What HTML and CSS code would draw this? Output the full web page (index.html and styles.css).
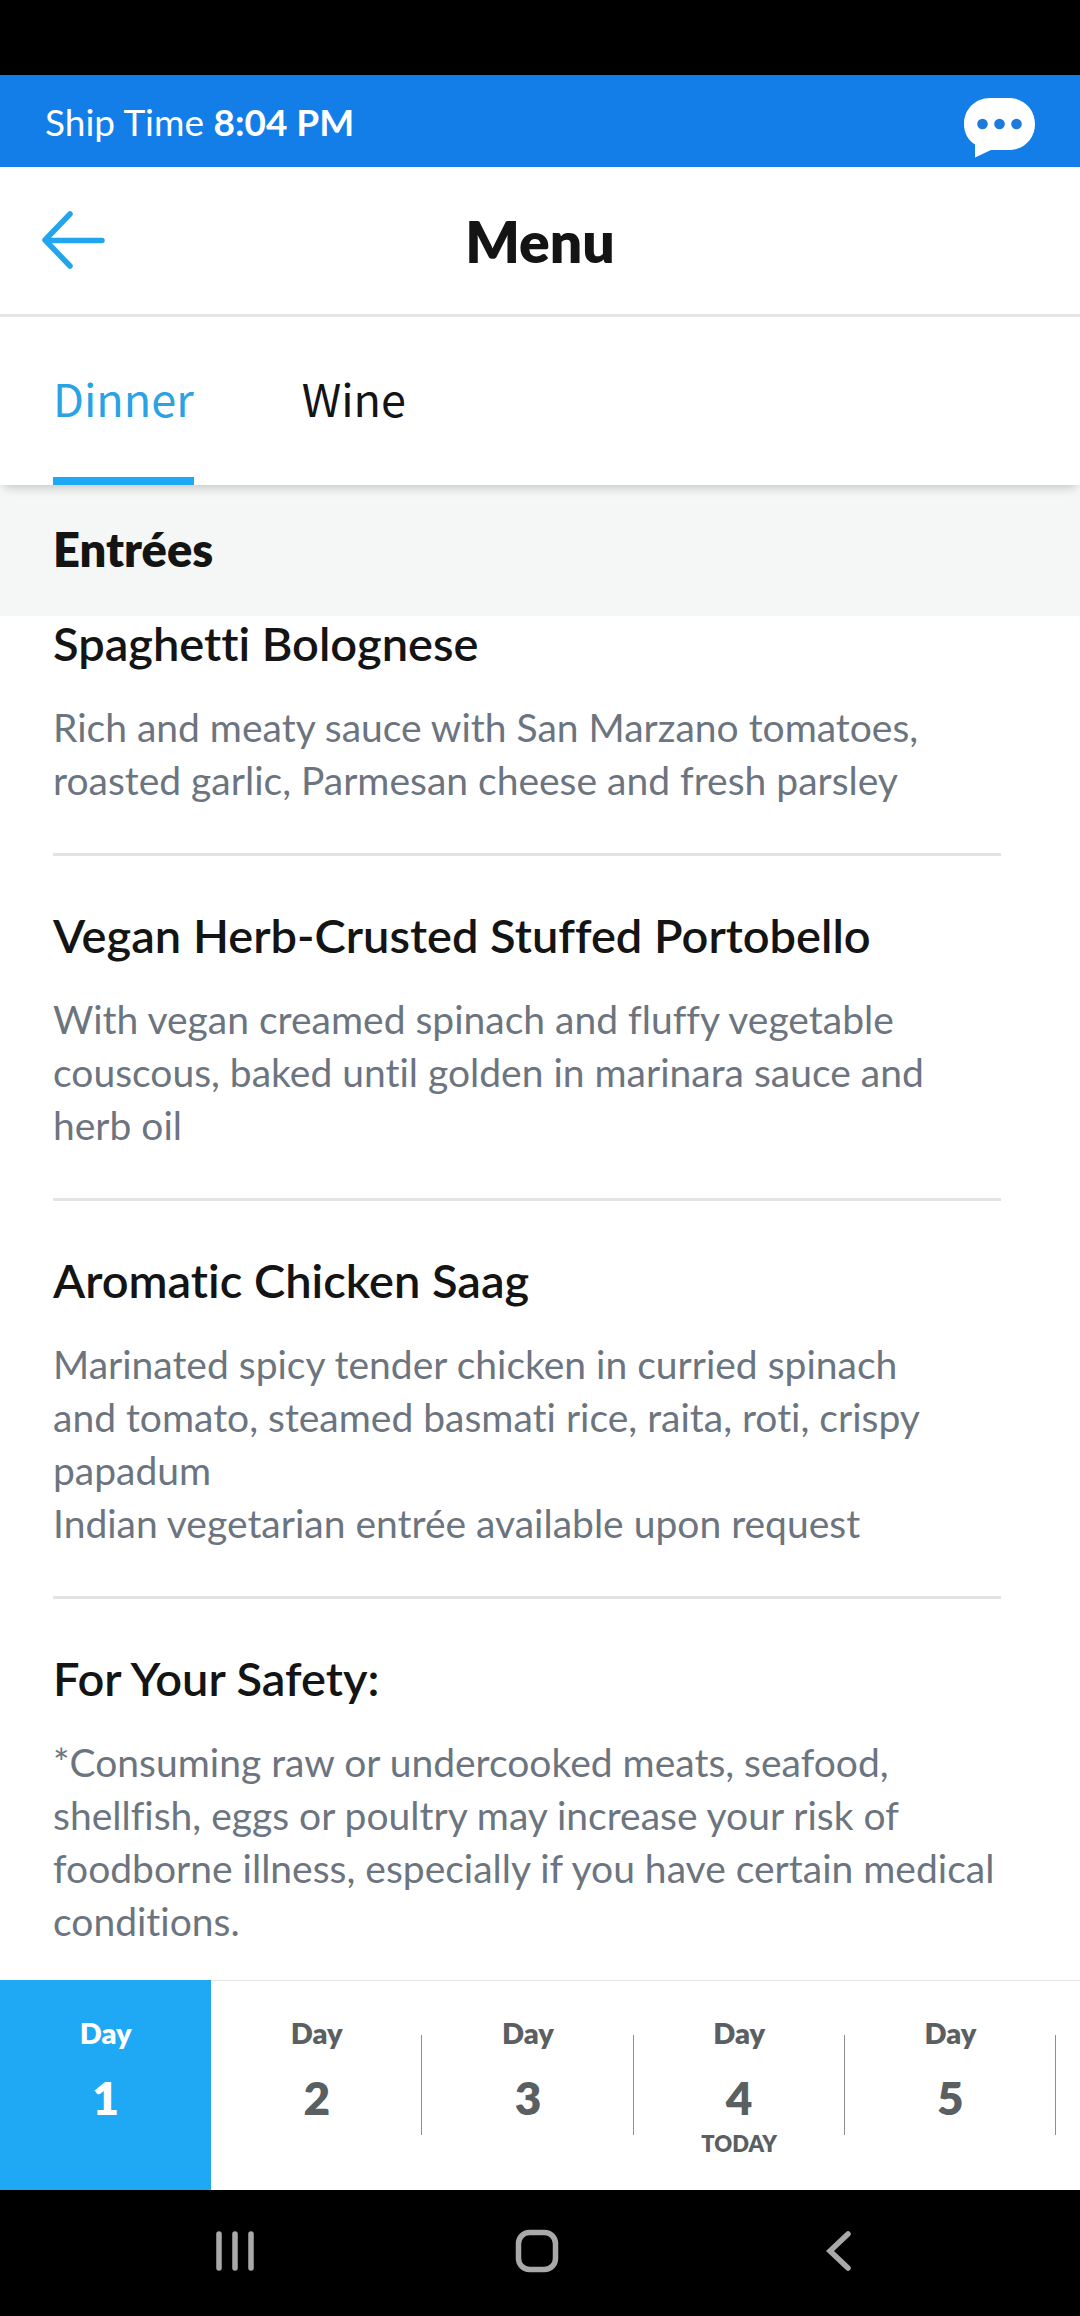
FILE: index.html
```html
<!DOCTYPE html>
<html lang="en">

<head>
    <meta charset="UTF-8">
    <meta name="viewport" content="width=device-width, initial-scale=1.0">
    <title>Menu</title>
    <link rel="stylesheet" href="styles.css">
</head>

<body>
    <div class="status-bar"></div>

    <div class="ship-bar">
        <p class="ship-time">Ship Time <strong>8:04 PM</strong></p>
        <button class="icon-button chat-button" aria-label="Chat">
            <svg width="71" height="60" viewBox="0 0 71 60">
                <path d="M26 0H45C60 0 71 11.500 71 26S60 52 45 52H27L11 59.500V46.500C4 42 0 35 0 26C0 11.500 11 0 26 0Z" fill="#fff" />
                <circle cx="18.500" cy="26" r="5.300" fill="#1e7bdc" />
                <circle cx="35.500" cy="26" r="5.300" fill="#1e7bdc" />
                <circle cx="52.500" cy="26" r="5.300" fill="#1e7bdc" />
            </svg>
        </button>
    </div>

    <header class="header">
        <button class="icon-button" aria-label="Back">
            <svg width="64" height="58" viewBox="0 0 64 58" fill="none" stroke="#22a5ec" stroke-width="5.500" stroke-linecap="round" stroke-linejoin="round">
                <path d="M28 3L3 29L28 55M4 29.500H60" />
            </svg>
        </button>
        <h1 class="title">Menu</h1>
    </header>

    <nav class="tabs">
        <button class="tab active">Dinner</button>
        <button class="tab">Wine</button>
    </nav>

    <main class="menu">
        <h2 class="section-title">Entrées</h2>
        <div class="dishes">
            <article class="dish">
                <h3 class="dish-name">Spaghetti Bolognese</h3>
                <p class="dish-text">Rich and meaty sauce with San Marzano tomatoes,<br>roasted garlic, Parmesan cheese and fresh parsley</p>
            </article>
            <article class="dish">
                <h3 class="dish-name">Vegan Herb-Crusted Stuffed Portobello</h3>
                <p class="dish-text">With vegan creamed spinach and fluffy vegetable<br>couscous, baked until golden in marinara sauce and<br>herb oil</p>
            </article>
            <article class="dish">
                <h3 class="dish-name">Aromatic Chicken Saag</h3>
                <p class="dish-text">Marinated spicy tender chicken in curried spinach<br>and tomato, steamed basmati rice, raita, roti, crispy<br>papadum<br>Indian vegetarian entrée available upon request</p>
            </article>
            <article class="dish">
                <h3 class="dish-name">For Your Safety:</h3>
                <p class="dish-text">*Consuming raw or undercooked meats, seafood,<br>shellfish, eggs or poultry may increase your risk of<br>foodborne illness, especially if you have certain medical<br>conditions.</p>
            </article>
        </div>
    </main>

    <div class="days">
        <button class="day active"><span class="day-label">Day</span><span class="day-number">1</span></button>
        <button class="day"><span class="day-label">Day</span><span class="day-number">2</span></button>
        <button class="day"><span class="day-label">Day</span><span class="day-number">3</span></button>
        <button class="day"><span class="day-label">Day</span><span class="day-number">4</span><span class="day-today">TODAY</span></button>
        <button class="day"><span class="day-label">Day</span><span class="day-number">5</span></button>
    </div>

    <div class="system-nav">
        <button class="icon-button" aria-label="Recent apps">
            <svg width="44" height="44" viewBox="0 0 44 44" stroke="#a9a9a9" stroke-width="5.500" stroke-linecap="round">
                <path d="M6 5V39M22 5V39M38 5V39" />
            </svg>
        </button>
        <button class="icon-button" aria-label="Home">
            <svg width="44" height="44" viewBox="0 0 44 44" fill="none" stroke="#a9a9a9" stroke-width="5.500">
                <rect x="3.500" y="3.500" width="37" height="37" rx="11" />
            </svg>
        </button>
        <button class="icon-button" aria-label="Go back">
            <svg width="44" height="44" viewBox="0 0 44 44" fill="none" stroke="#a9a9a9" stroke-width="5.500" stroke-linecap="round">
                <path d="M31 5L13 22L31 39" />
            </svg>
        </button>
    </div>
</body>

</html>
```
FILE: styles.css
```css
* {
    margin: 0;
    padding: 0;
    box-sizing: border-box;
}

body {
    display: flex;
    flex-direction: column;
    min-height: 100vh;
    background: #fff;
    color: #141414;
    font-family: Lato, "Liberation Sans", sans-serif;
    font-variant-ligatures: none;
}

button {
    border: none;
    background: none;
    color: inherit;
    font-family: inherit;
    cursor: pointer;
}

.icon-button {
    display: flex;
    align-items: center;
    justify-content: center;
}

.status-bar {
    height: 75px;
    background: #000;
}

.ship-bar {
    display: flex;
    align-items: center;
    justify-content: space-between;
    height: 92px;
    padding: 2px 45px 0;
    background: #147ee8;
    color: #fff;
}

.ship-time {
    font-size: 37px;
    line-height: 48px;
}

.chat-button {
    padding-top: 12px;
}

.header {
    display: grid;
    grid-template-columns: 64px 1fr 64px;
    align-items: center;
    height: 150px;
    padding: 0 42px 2px;
    border-bottom: 3px solid #e6e6e6;
}

.title {
    padding-top: 2px;
    text-align: center;
    font-size: 57px;
    font-weight: 800;
    line-height: 68px;
}

.tabs {
    display: flex;
    gap: 108px;
    height: 168px;
    padding: 0 53px;
    position: relative;
    background: #fff;
    box-shadow: 0 6px 10px -4px rgba(0, 0, 0, 0.22);
}

.tab {
    padding-bottom: 8px;
    border-top: 8px solid transparent;
    border-bottom: 8px solid transparent;
    font-family: "Noto Sans CJK SC", "Noto Sans", sans-serif;
    font-size: 45px;
    font-weight: 400;
}

.tab.active {
    border-bottom-color: #1fa8f4;
    color: #2aa2e4;
}

.menu {
    flex: 1;
}

.section-title {
    padding: 38px 53px 40px;
    background: #f5f7f7;
    font-size: 47px;
    font-weight: 800;
    line-height: 53px;
}

.dishes {
    padding: 0 79px 0 53px;
}

.dish {
    padding: 53px 0 46px;
    border-bottom: 3px solid #e3e3e3;
}

.dish:first-child {
    padding-top: 1px;
}

.dish:last-child {
    padding-bottom: 0;
    border-bottom: none;
}

.dish-name {
    margin-bottom: 31px;
    font-size: 47px;
    font-weight: 600;
    line-height: 53px;
}

.dish-text {
    color: #6c757f;
    font-size: 39px;
    line-height: 53px;
    white-space: nowrap;
}

.days {
    display: grid;
    grid-template-columns: repeat(5, 1fr);
    height: 210px;
    padding-right: 24px;
    box-shadow: inset 0 1px #e3e6e6;
    color: #5a6061;
}

.day {
    display: flex;
    flex-direction: column;
    align-items: center;
    padding-top: 36px;
    background: linear-gradient(#8b9091, #8b9091) no-repeat right 55px / 1px 100px;
    font-weight: 800;
}

.day.active {
    background: #1fa8f4;
    color: #fff;
}

.day-label {
    font-size: 29px;
    line-height: 34px;
}

.day-number {
    margin-top: 20px;
    font-size: 46px;
    line-height: 56px;
}

.day-today {
    font-size: 22px;
    line-height: 36px;
}

.system-nav {
    display: grid;
    grid-template-columns: repeat(3, 1fr);
    height: 126px;
    padding: 0 90px 4px 84px;
    background: #000;
}
```
